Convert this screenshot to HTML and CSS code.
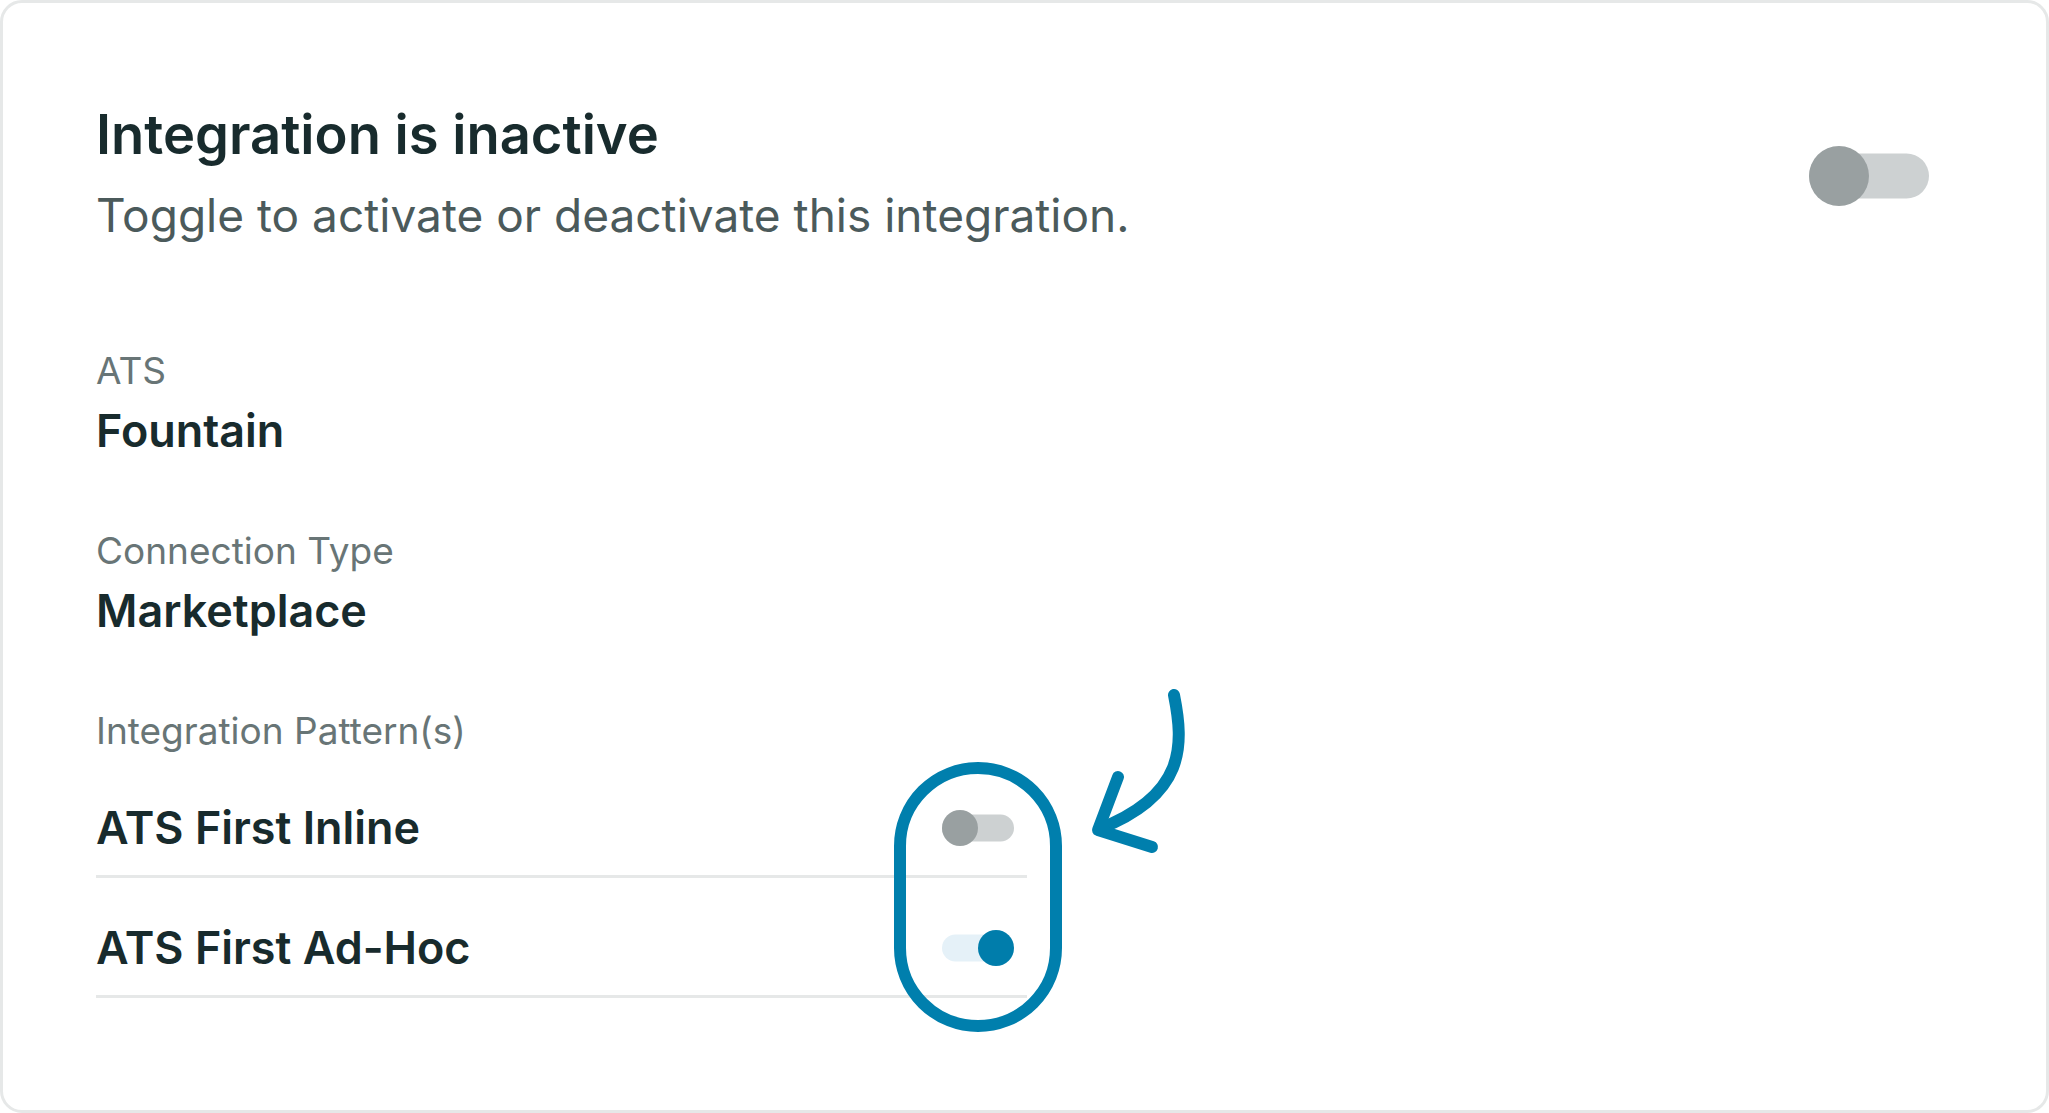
FILE: index.html
```html
<!DOCTYPE html>
<html lang="en">
<head>
<meta charset="utf-8">
<title>Integration</title>
<link rel="stylesheet" href="styles.css">
</head>
<body>
<div class="card">
  <div class="header">
    <div class="header-text">
      <h1 class="title">Integration is inactive</h1>
      <p class="subtitle">Toggle to activate or deactivate this integration.</p>
    </div>
    <div class="switch switch-lg" role="switch" aria-checked="false">
      <span class="track"></span>
      <span class="knob"></span>
    </div>
  </div>

  <div class="field field-first">
    <div class="label">ATS</div>
    <div class="value">Fountain</div>
  </div>
  <div class="field">
    <div class="label">Connection Type</div>
    <div class="value">Marketplace</div>
  </div>
  <div class="field field-patterns">
    <div class="label">Integration Pattern(s)</div>
  </div>

  <div class="patterns">
    <div class="pattern-row">
      <span class="value">ATS First Inline</span>
      <div class="switch switch-sm" role="switch" aria-checked="false">
        <span class="track"></span>
        <span class="knob"></span>
      </div>
    </div>
    <div class="pattern-row">
      <span class="value">ATS First Ad-Hoc</span>
      <div class="switch switch-sm on" role="switch" aria-checked="true">
        <span class="track"></span>
        <span class="knob"></span>
      </div>
    </div>
  </div>

  <svg class="annotation" width="2049" height="1113" viewBox="0 0 2049 1113" aria-hidden="true">
    <rect x="900" y="768" width="156" height="258" rx="78" ry="78" fill="none" stroke="#007fad" stroke-width="12"/>
    <path d="M1174 695 C1184 745 1186 795 1099 829" fill="none" stroke="#007fad" stroke-width="12" stroke-linecap="round"/>
    <path d="M1118 777 L1098 830 L1152 847" fill="none" stroke="#007fad" stroke-width="12" stroke-linecap="round" stroke-linejoin="round"/>
  </svg>
</div>
</body>
</html>
```

FILE: styles.css
```css
html, body {
  margin: 0;
  padding: 0;
  background: #ffffff;
}

body {
  font-family: Inter, "Noto Sans", "Liberation Sans", sans-serif;
  color: #182b2d;
}

.card {
  position: relative;
  box-sizing: border-box;
  width: 2049px;
  height: 1113px;
  border: 3px solid #e6e8e8;
  border-radius: 22px;
  padding: 99px 117px 0 93px;
  background: #ffffff;
  overflow: hidden;
}

.header {
  display: flex;
  justify-content: space-between;
  align-items: flex-start;
}

.title {
  margin: 0;
  font-size: 54.3px;
  line-height: 64px;
  font-weight: 600;
  color: #182b2d;
}

.subtitle {
  margin: 21px 0 0 0;
  font-size: 46px;
  line-height: 56px;
  font-weight: 400;
  color: #4b5a5b;
}

.switch {
  position: relative;
  flex: none;
}

.switch .track {
  position: absolute;
  left: 0;
  right: 0;
  top: 50%;
  transform: translateY(-50%);
  background: #cdd1d2;
}

.switch .knob {
  position: absolute;
  top: 0;
  left: 0;
  border-radius: 50%;
  background: #99a0a1;
}

.switch-lg {
  width: 120px;
  height: 60px;
  margin-top: 44px;
}

.switch-lg .track {
  height: 45px;
  border-radius: 23px;
}

.switch-lg .knob {
  width: 60px;
  height: 60px;
}

.switch-sm {
  width: 72px;
  height: 36px;
  margin-right: 13px;
}

.switch-sm .track {
  height: 27px;
  border-radius: 14px;
}

.switch-sm .knob {
  width: 36px;
  height: 36px;
}

.switch-sm.on .track {
  background: #e5f1f8;
}

.switch-sm.on .knob {
  left: auto;
  right: 0;
  background: #007dab;
}

.field {
  margin-top: 70px;
}

.field-first {
  margin-top: 106px;
}

.field-patterns {
  margin-top: 70px;
}

.label {
  font-size: 37px;
  line-height: 44px;
  font-weight: 400;
  color: #687576;
}

.label-narrow {
  font-size: 36.6px;
}

.value {
  margin-top: 10px;
  display: block;
  font-size: 44.9px;
  line-height: 56px;
  font-weight: 600;
  color: #182b2d;
}

.patterns {
  width: 931px;
  margin-top: 5px;
}

.pattern-row {
  display: flex;
  align-items: center;
  justify-content: space-between;
  padding: 42px 0 19px 0;
  border-bottom: 3px solid #e6e8e8;
}

.pattern-row .value {
  margin-top: 0;
}

.annotation {
  position: absolute;
  left: -3px;
  top: -3px;
  pointer-events: none;
}
```
